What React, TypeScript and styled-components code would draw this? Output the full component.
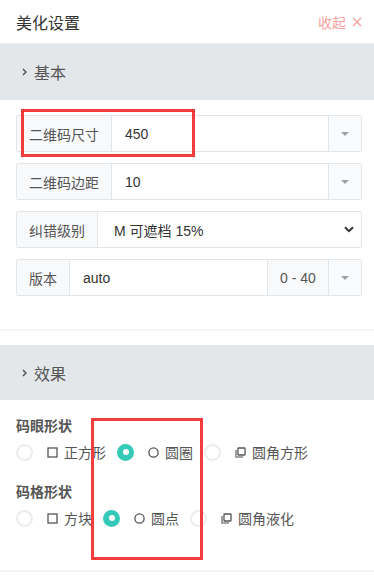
import styled, { createGlobalStyle } from 'styled-components'

const GlobalStyle = createGlobalStyle`
  html, body {
    margin: 0;
    padding: 0;
    background: #fff;
  }
  body {
    font-family: 'Liberation Sans', 'Noto Sans CJK SC', sans-serif;
    color: #333;
  }
`

const Page = styled.div`
  position: relative;
  width: 374px;
  height: 575px;
  overflow: hidden;
  background: #fff;
`

const TopBar = styled.div`
  height: 43px;
  padding: 0 12px 0 16px;
  display: flex;
  align-items: center;
  justify-content: space-between;
  border-bottom: 1px solid #eef0f2;
`

const Title = styled.div`
  font-size: 16px;
  color: #333;
`

const Collapse = styled.div`
  font-size: 14px;
  color: #f7a1a1;
  display: flex;
  align-items: center;
  gap: 6px;
`

const Panel = styled.section<{ $last?: boolean }>`
  border-bottom: 2px solid #f4f5f7;
  margin-bottom: ${(p) => (p.$last ? '0' : '14px')};
`

const PanelHead = styled.div<{ $h: number }>`
  height: ${(p) => p.$h}px;
  background: #e4e7ea;
  display: flex;
  align-items: center;
  padding-left: 22px;
  font-size: 16px;
  color: #555;
  gap: 7px;
`

const PanelBody = styled.div<{ $pad: string }>`
  padding: ${(p) => p.$pad};
`

const InputGroup = styled.div`
  display: flex;
  height: 37px;
  box-sizing: border-box;
  border: 1px solid #e3e6e9;
  border-radius: 2px;
  margin-bottom: 11px;
  font-size: 14px;
  &:last-child {
    margin-bottom: 0;
  }
`

const Addon = styled.div<{ $w: number; $center?: boolean }>`
  width: ${(p) => p.$w}px;
  flex: none;
  box-sizing: border-box;
  background: #f8f9fb;
  display: flex;
  align-items: center;
  justify-content: ${(p) => (p.$center ? 'center' : 'flex-start')};
  padding: ${(p) => (p.$center ? '0' : '0 0 0 12px')};
  color: #555;
  border-right: 1px solid #e3e6e9;
`

const Value = styled.div<{ $pad: number }>`
  flex: 1;
  display: flex;
  align-items: center;
  padding-left: ${(p) => p.$pad}px;
  color: #333;
  border-right: 1px solid #e3e6e9;
`

const SelectValue = styled.div`
  flex: 1;
  display: flex;
  align-items: center;
  justify-content: space-between;
  padding: 0 7px 0 16px;
  color: #333;
`

const Drop = styled.div`
  width: 32px;
  flex: none;
  background: #fafbfc;
  display: flex;
  align-items: center;
  justify-content: center;
`

const Caret = styled.span`
  width: 0;
  height: 0;
  border-left: 4px solid transparent;
  border-right: 4px solid transparent;
  border-top: 4px solid #9aa0a6;
`

const FieldTitle = styled.div`
  font-size: 14px;
  font-weight: 700;
  color: #555;
  line-height: 20px;
  margin-bottom: 6px;
`

const RadioRow = styled.div`
  display: flex;
  align-items: center;
  height: 20px;
  margin-bottom: 20px;
  &:last-child {
    margin-bottom: 0;
  }
`

const RadioItem = styled.label`
  display: inline-flex;
  align-items: center;
  margin-right: 11px;
  font-size: 14px;
  color: #555;
`

const Dot = styled.span<{ $on?: boolean }>`
  width: 17px;
  height: 17px;
  box-sizing: border-box;
  border-radius: 50%;
  border: 2px solid ${(p) => (p.$on ? '#35c9b8' : '#ececec')};
  background: ${(p) => (p.$on ? '#35c9b8' : '#fff')};
  display: flex;
  align-items: center;
  justify-content: center;
  margin-right: 14px;
  &::after {
    content: '';
    display: ${(p) => (p.$on ? 'block' : 'none')};
    width: 6px;
    height: 6px;
    border-radius: 50%;
    background: #fff;
  }
`

const Shape = styled.svg`
  width: 11px;
  height: 11px;
  margin-right: 6px;
  flex: none;
`

const Mark = styled.div<{ $x: number; $y: number; $w: number; $h: number }>`
  position: absolute;
  left: ${(p) => p.$x}px;
  top: ${(p) => p.$y}px;
  width: ${(p) => p.$w}px;
  height: ${(p) => p.$h}px;
  box-sizing: border-box;
  border: 3px solid #f43c3c;
  pointer-events: none;
`

type Kind = 'square' | 'circle' | 'rounded'

const ShapeIcon = ({ kind }: { kind: Kind }) => {
  if (kind === 'square') {
    return (
      <Shape viewBox='0 0 11 11'>
        <rect x='1' y='1' width='9' height='9' fill='none' stroke='#555' strokeWidth='1.3' />
      </Shape>
    )
  }
  if (kind === 'circle') {
    return (
      <Shape viewBox='0 0 11 11'>
        <circle cx='5.5' cy='5.5' r='4.6' fill='none' stroke='#555' strokeWidth='1.3' />
      </Shape>
    )
  }
  return (
    <Shape viewBox='0 0 11 11'>
      <path d='M1 3 V10 H8' fill='none' stroke='#888' strokeWidth='1.6' />
      <rect x='3' y='1' width='7' height='7' rx='0.5' fill='none' stroke='#555' strokeWidth='1.3' />
    </Shape>
  )
}

const Radio = ({ on, kind, text }: { on?: boolean; kind: Kind; text: string }) => (
  <RadioItem>
    <Dot $on={on} />
    <ShapeIcon kind={kind} />
    {text}
  </RadioItem>
)

const Chevron = () => (
  <svg width='10' height='7' viewBox='0 0 10 7'>
    <path d='M1 1.2 L5 5.2 L9 1.2' fill='none' stroke='#333' strokeWidth='2' />
  </svg>
)

const Arrow = () => (
  <svg width='5' height='8' viewBox='0 0 5 8'>
    <path d='M1 1 L4 4 L1 7' fill='none' stroke='#555' strokeWidth='1.5' />
  </svg>
)

const Close = () => (
  <svg width='10' height='10' viewBox='0 0 10 10'>
    <path d='M1 1 L9 9 M9 1 L1 9' fill='none' stroke='#f7a1a1' strokeWidth='1.4' />
  </svg>
)

const App = () => {
  return (
    <>
      <GlobalStyle />
      <Page>
        <TopBar>
          <Title>美化设置</Title>
          <Collapse>
            收起
            <Close />
          </Collapse>
        </TopBar>

        <Panel>
          <PanelHead $h={56}>
            <Arrow />
            基本
          </PanelHead>
          <PanelBody $pad='15px 12px 33px 16px'>
            <InputGroup>
              <Addon $w={95}>二维码尺寸</Addon>
              <Value $pad={13}>450</Value>
              <Drop>
                <Caret />
              </Drop>
            </InputGroup>
            <InputGroup>
              <Addon $w={95}>二维码边距</Addon>
              <Value $pad={13}>10</Value>
              <Drop>
                <Caret />
              </Drop>
            </InputGroup>
            <InputGroup>
              <Addon $w={81}>纠错级别</Addon>
              <SelectValue>
                M 可遮档 15%
                <Chevron />
              </SelectValue>
            </InputGroup>
            <InputGroup>
              <Addon $w={53}>版本</Addon>
              <Value $pad={13}>auto</Value>
              <Addon $w={61} $center>
                0 - 40
              </Addon>
              <Drop>
                <Caret />
              </Drop>
            </InputGroup>
          </PanelBody>
        </Panel>

        <Panel $last>
          <PanelHead $h={55}>
            <Arrow />
            效果
          </PanelHead>
          <PanelBody $pad='16px 12px 42px 16px'>
            <FieldTitle>码眼形状</FieldTitle>
            <RadioRow>
              <Radio kind='square' text='正方形' />
              <Radio on kind='circle' text='圆圈' />
              <Radio kind='rounded' text='圆角方形' />
            </RadioRow>
            <FieldTitle>码格形状</FieldTitle>
            <RadioRow>
              <Radio kind='square' text='方块' />
              <Radio on kind='circle' text='圆点' />
              <Radio kind='rounded' text='圆角液化' />
            </RadioRow>
          </PanelBody>
        </Panel>

        <Mark $x={21} $y={109} $w={174} $h={48} />
        <Mark $x={91} $y={418} $w={112} $h={142} />
      </Page>
    </>
  )
}

export default App
